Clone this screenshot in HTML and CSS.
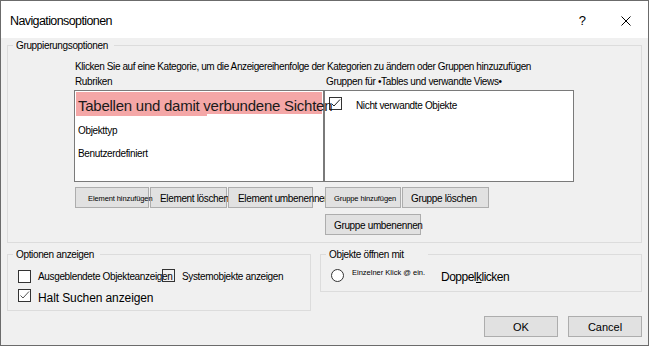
FILE: index.html
```html
<!DOCTYPE html>
<html lang="de">
<head>
    <meta charset="UTF-8">
    <title>Navigationsoptionen</title>
    <link rel="stylesheet" href="styles.css">
</head>
<body>
    <div class="dialog">
        <!-- Titelleiste -->
        <div class="titlebar">
            <span class="title">Navigationsoptionen</span>
            <span class="help">?</span>
            <svg class="close" viewBox="0 0 10 10"><path d="M0.5 0.5 L9.5 9.5 M9.5 0.5 L0.5 9.5" stroke="#000" stroke-width="1" fill="none"/></svg>
        </div>

        <div class="body">
            <!-- Gruppierungsoptionen -->
            <fieldset class="group group-main">
                <legend>Gruppierungsoptionen</legend>
                <div class="main-grid">
                    <p class="hint">Klicken Sie auf eine Kategorie, um die Anzeigereihenfolge der Kategorien zu ändern oder Gruppen hinzuzufügen</p>
                    <div class="col-label">Rubriken</div>
                    <div class="col-label col-label-right">Gruppen für •Tables und verwandte Views•</div>

                    <ul class="listbox listbox-left">
                        <li class="item item-selected">Tabellen und damit verbundene Sichten</li>
                        <li class="item item-second">Objekttyp</li>
                        <li class="item">Benutzerdefiniert</li>
                    </ul>
                    <div class="listbox listbox-right">
                        <div class="group-item">
                            <span class="checkbox checkbox-clear">
                                <svg viewBox="0 0 11 11"><path d="M1.5 5.5 L4 8 L10 1.5" stroke="#222" fill="none"/></svg>
                            </span>
                            <span class="group-item-label">Nicht verwandte Objekte</span>
                        </div>
                    </div>

                    <div class="btn-group">
                        <button class="btn btn-tiny btn-item-add">Element hinzufügen</button>
                        <button class="btn btn-item-del">Element löschen</button>
                        <button class="btn btn-item-ren">Element umbenennen</button>
                    </div>
                    <div class="btn-group">
                        <button class="btn btn-tiny btn-group-add">Gruppe hinzufügen</button>
                        <button class="btn btn-group-del">Gruppe löschen</button>
                        <button class="btn btn-group-ren">Gruppe umbenennen</button>
                    </div>
                </div>
            </fieldset>

            <div class="options-row">
                <!-- Optionen anzeigen -->
                <fieldset class="group group-display">
                    <legend>Optionen anzeigen</legend>
                    <div class="display-body">
                        <div class="check-row">
                            <span class="checkbox"></span>
                            <span class="check-label check-label-hidden">Ausgeblendete Objekteanzeigen</span>
                            <span class="checkbox checkbox-clear checkbox-up"></span>
                            <span class="check-label">Systemobjekte anzeigen</span>
                        </div>
                        <div class="check-row">
                            <span class="checkbox">
                                <svg viewBox="0 0 11 11"><path d="M1.5 5.5 L4 8 L10 1.5" stroke="#555" fill="none"/></svg>
                            </span>
                            <span class="check-label check-label-big">Halt Suchen anzeigen</span>
                        </div>
                    </div>
                </fieldset>

                <!-- Objekte öffnen mit -->
                <fieldset class="group group-open">
                    <legend class="legend-wide">Objekte öffnen mit</legend>
                    <div class="open-body">
                        <span class="radio"></span>
                        <span class="radio-label-small">Einzelner Klick @ ein.</span>
                        <span class="radio-label-big">Doppel<u>k</u>licken</span>
                    </div>
                </fieldset>
            </div>

            <div class="footer">
                <button class="btn btn-dialog">OK</button>
                <button class="btn btn-dialog">Cancel</button>
            </div>
        </div>
    </div>
</body>
</html>
```

FILE: styles.css
```css
/* Allgemein */
* {
    box-sizing: border-box;
}

body {
    margin: 0;
    background: #fff;
    font-family: "Liberation Sans", Arial, sans-serif;
    color: #000;
}

/* Fenster */
.dialog {
    width: 649px;
    height: 346px;
    border: 1px solid #6b6b6b;
    background: #f0f0f0;
    display: flex;
    flex-direction: column;
}

/* Titelleiste */
.titlebar {
    flex: none;
    height: 37px;
    background: #fff;
    display: flex;
    align-items: flex-start;
    padding: 12px 0 0 9px;
}

.title {
    font-size: 12.5px;
    line-height: 16px;
    letter-spacing: -0.6px;
}

.help {
    margin-left: auto;
    margin-right: 35px;
    font-size: 13px;
    line-height: 16px;
}

.close {
    width: 10px;
    height: 10px;
    margin-top: 3px;
    margin-right: 17px;
}

/* Inhalt */
.body {
    flex: 1;
    padding: 0 6px;
    display: flex;
    flex-direction: column;
}

.group {
    margin: 0;
    padding: 0;
    min-width: 0;
    border: 1px solid #dcdcdc;
}

.group legend {
    margin-left: 5px;
    padding: 0 6px 0 3px;
    font-size: 10px;
    line-height: 13px;
    letter-spacing: -0.35px;
}

.group .legend-wide {
    padding-right: 24px;
}

.group-main {
    margin-top: 1px;
    height: 204px;
}

.main-grid {
    display: grid;
    grid-template-columns: 250px 250px;
    padding: 8px 0 0 66px;
    font-size: 10px;
    letter-spacing: -0.35px;
}

.hint {
    grid-column: 1 / -1;
    margin: 0;
    padding-left: 1px;
    line-height: 14px;
    letter-spacing: -0.4px;
    white-space: nowrap;
}

.col-label {
    margin-top: 1px;
    padding-left: 1px;
    line-height: 14px;
    white-space: nowrap;
}

.col-label-right {
    padding-left: 2px;
}

/* Listen */
.listbox {
    margin: 1px 0 0;
    height: 92px;
    padding: 1px;
    border: 1px solid #7a7a7a;
    background: #fff;
    list-style: none;
}

.listbox-left {
    position: relative;
    z-index: 1;
}

.item {
    height: 23px;
    padding-left: 2px;
    line-height: 23px;
    white-space: nowrap;
}

.item-selected {
    height: 24px;
    padding-top: 6px;
    font-size: 15px;
    line-height: 16px;
    letter-spacing: -0.25px;
    color: #1a1a1a;
    background:
        linear-gradient(#f4a7a7, #f4a7a7) left top / 100% 22px no-repeat,
        linear-gradient(#f4a7a7, #f4a7a7) left bottom / 131px 2px no-repeat;
}

.item-second {
    margin-top: 3px;
}

.group-item {
    display: flex;
    align-items: flex-start;
    padding: 5px 0 0 3px;
}

.group-item-label {
    margin: 2px 0 0 14px;
    line-height: 14px;
    white-space: nowrap;
}

/* Kontrollkästchen */
.checkbox {
    flex: none;
    display: block;
    width: 13px;
    height: 13px;
    border: 1px solid #333;
    background: #fff;
}

.checkbox svg {
    display: block;
    width: 11px;
    height: 11px;
}

.checkbox-clear {
    background: transparent;
}

.checkbox-up {
    margin-top: -1px;
}

/* Schaltflächen */
.btn-group {
    display: flex;
    flex-wrap: wrap;
    align-content: flex-start;
    gap: 6px 1px;
    margin-top: 5px;
    padding-left: 1px;
}

.btn {
    height: 21px;
    margin: 0;
    padding: 1px 0 0 8px;
    border: 1px solid #adadad;
    background: #e1e1e1;
    font-family: inherit;
    font-size: 10px;
    letter-spacing: -0.35px;
    color: #000;
    text-align: left;
    white-space: nowrap;
}

.btn-tiny {
    position: relative;
    z-index: 1;
    font-size: 7.5px;
    letter-spacing: -0.1px;
}

.btn-item-add { width: 74px; padding-left: 12px; }
.btn-item-del { width: 77px; padding-left: 9px; }
.btn-item-ren { width: 85px; padding-left: 9px; }
.btn-group-add { width: 76px; }
.btn-group-del { width: 87px; }
.btn-group-ren { width: 96px; }

/* Untere Gruppen */
.options-row {
    display: flex;
    align-items: flex-start;
    gap: 9px;
    margin-top: 5px;
}

.group-display {
    width: 304px;
    height: 63px;
}

.group-open {
    width: 322px;
    height: 44px;
}

.display-body {
    padding: 9px 0 0 10px;
}

.check-row {
    display: flex;
    align-items: flex-start;
}

.check-row + .check-row {
    margin-top: 5px;
}

.check-label {
    margin-left: 7px;
    font-size: 10px;
    line-height: 14px;
    letter-spacing: -0.35px;
    white-space: nowrap;
}

.check-label-hidden {
    width: 124px;
}

.check-label-big {
    margin-top: 2px;
    font-size: 12px;
    letter-spacing: -0.1px;
}

.open-body {
    display: flex;
    align-items: flex-start;
    padding: 8px 0 0 10px;
}

.radio {
    flex: none;
    width: 13px;
    height: 13px;
    border: 1px solid #333;
    border-radius: 50%;
    background: #fff;
}

.radio-label-small {
    width: 89px;
    margin: -1px 0 0 8px;
    font-size: 7.5px;
    line-height: 10px;
    white-space: nowrap;
}

.radio-label-big {
    font-size: 12px;
    line-height: 16px;
    letter-spacing: -0.5px;
    white-space: nowrap;
}

/* Fußzeile */
.footer {
    display: flex;
    justify-content: flex-end;
    gap: 10px;
    margin-top: 5px;
}

.btn-dialog {
    width: 74px;
    padding: 0;
    font-size: 11px;
    letter-spacing: 0;
    text-align: center;
}
```
